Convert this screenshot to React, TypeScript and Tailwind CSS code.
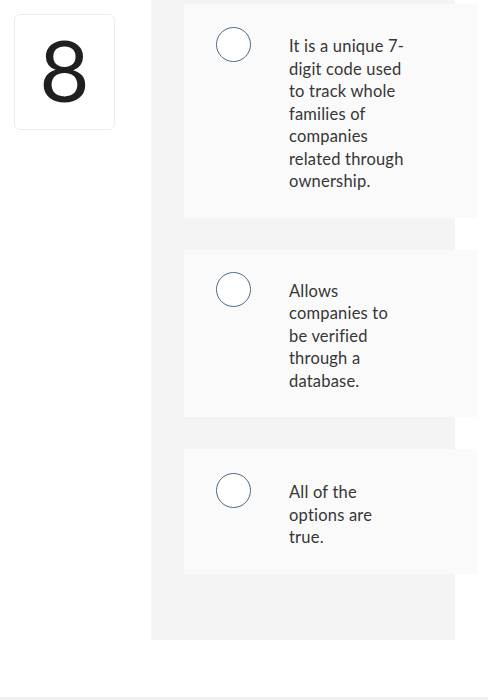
const options = [
  {
    lines: ["It is a unique 7-", "digit code used", "to track whole", "families of", "companies", "related through", "ownership."],
    circleTop: "mt-[23px]",
    textTop: "mt-[31px]",
  },
  {
    lines: ["Allows", "companies to", "be verified", "through a", "database."],
    circleTop: "mt-[22px]",
    textTop: "mt-[30px]",
  },
  {
    lines: ["All of the", "options are", "true."],
    circleTop: "mt-[24px]",
    textTop: "mt-[32px]",
  },
]

export default function App() {
  return (
    <div className="relative h-[700px] w-[488px] overflow-hidden bg-white" style={{ fontFamily: "Lato, 'Open Sans', sans-serif" }}>
      <div className="flex">
        {/* question number */}
        <div className="w-[151px] shrink-0 pl-[14px] pt-[14px]">
          <div className="flex h-[116px] w-[101px] items-center justify-center rounded-[6px] border border-[#ececec] bg-white">
            <span className="-mt-[6px] text-[86px] leading-none text-[#1f1f1f]">8</span>
          </div>
        </div>

        {/* answers column */}
        <div className="flex h-[640px] w-[304px] shrink-0 flex-col gap-[32px] bg-[#f4f4f4] pt-[4px]">
          {options.map((o, i) => (
            <div key={i} className="ml-[33px] flex w-[293px] shrink-0 items-start bg-[#fafafa] pb-[25px] pl-[32px]">
              <div className={`${o.circleTop} h-[35px] w-[35px] shrink-0 rounded-full border-[1.5px] border-[#4c6a86] bg-white`} />
              <p className={`${o.textTop} ml-[38px] text-[16.5px] leading-[22.5px] tracking-[0.2px] text-[#363636]`}>
                {o.lines.map((l, j) => (
                  <span key={j} className="block whitespace-nowrap">{l}</span>
                ))}
              </p>
            </div>
          ))}
        </div>
      </div>
      <div className="absolute bottom-0 left-0 h-[3px] w-full bg-[#f0f0f0]" />
    </div>
  )
}
